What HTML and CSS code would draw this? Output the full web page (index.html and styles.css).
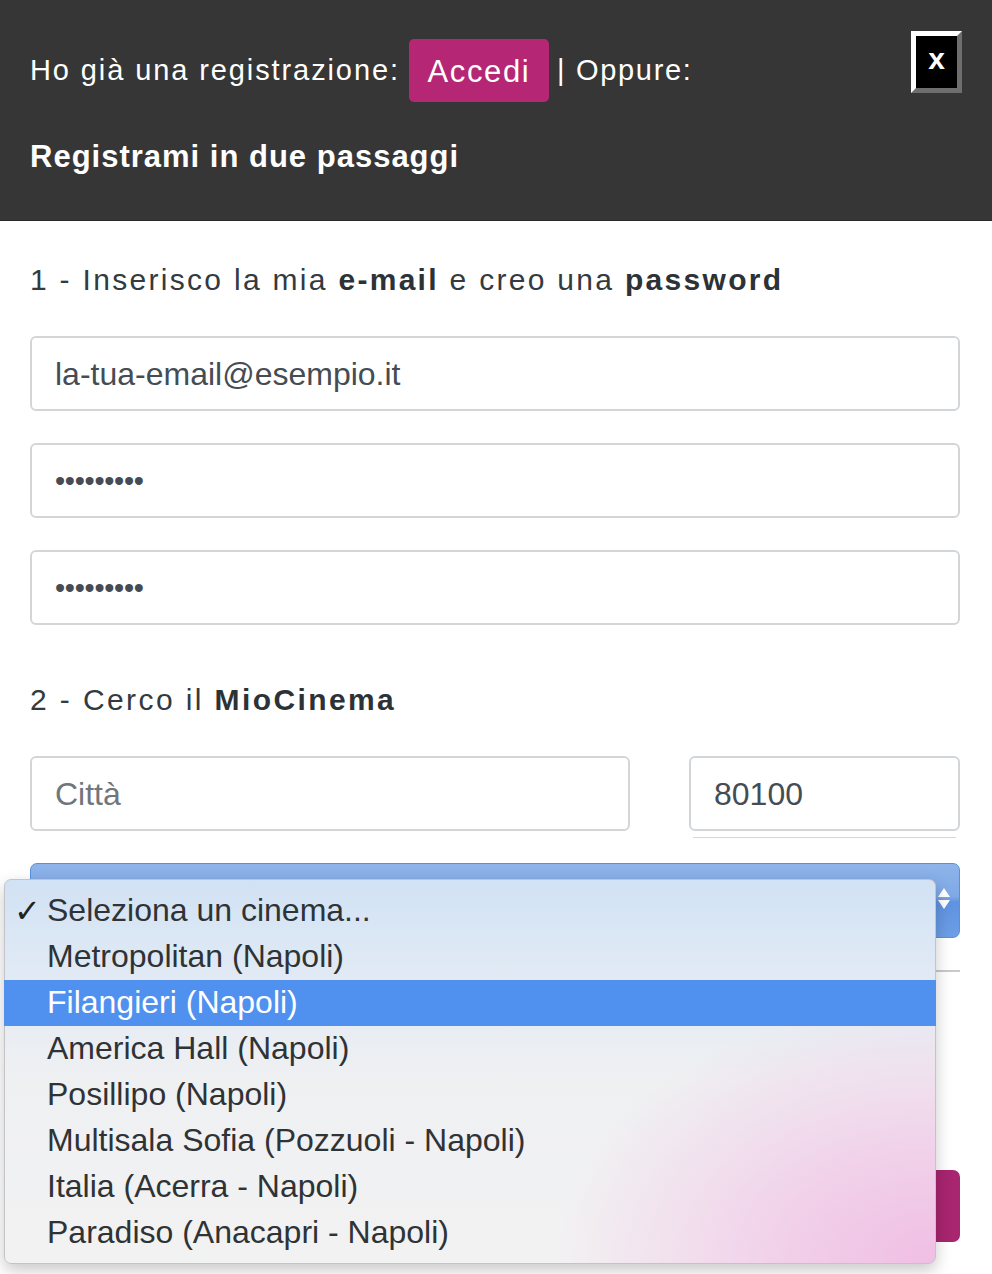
FILE: index.html
```html
<!DOCTYPE html>
<html lang="it">
<head>
<meta charset="utf-8">
<title>Registrazione</title>
<link rel="stylesheet" href="styles.css">
</head>
<body>
<div class="page">
  <header class="header">
    <div class="login-row">
      <span class="lead">Ho già una registrazione:</span>
      <a class="btn-accedi" href="#">Accedi</a>
      <span class="sep">| Oppure:</span>
      <button class="close" type="button">x</button>
    </div>
    <div class="reg-title">Registrami in due passaggi</div>
  </header>

  <main class="form">
    <h2 class="step">1 - Inserisco la mia <b>e-mail</b> e creo una <b>password</b></h2>
    <div class="field"><span class="value">la-tua-email@esempio.it</span></div>
    <div class="field"><span class="dots">•••••••••</span></div>
    <div class="field"><span class="dots">•••••••••</span></div>

    <h2 class="step step2">2 - Cerco il <b>MioCinema</b></h2>
    <div class="row">
      <div class="field city"><span class="placeholder">Città</span></div>
      <div class="cap-wrap">
        <div class="field cap"><span class="value">80100</span></div>
        <div class="cap-line"></div>
      </div>
    </div>
    <div class="select">
      <span class="arrows"><span class="up"></span><span class="down"></span></span>
    </div>
    <div class="rule"></div>
    <div class="spacer"></div>
    <div class="submit">Registrami</div>
  </main>

  <div class="menu">
    <div class="opt checked"><span class="check">✓</span>Seleziona un cinema...</div>
    <div class="opt">Metropolitan (Napoli)</div>
    <div class="opt active">Filangieri (Napoli)</div>
    <div class="opt">America Hall (Napoli)</div>
    <div class="opt">Posillipo (Napoli)</div>
    <div class="opt">Multisala Sofia (Pozzuoli - Napoli)</div>
    <div class="opt">Italia (Acerra - Napoli)</div>
    <div class="opt">Paradiso (Anacapri - Napoli)</div>
  </div>
</div>
</body>
</html>
```

FILE: styles.css
```css
* { box-sizing: border-box; }
html, body { margin: 0; padding: 0; }
body {
  width: 992px;
  height: 1274px;
  overflow: hidden;
  background: #fff;
  font-family: "Liberation Sans", Arial, sans-serif;
}
.page { position: relative; width: 992px; height: 1274px; }

.header {
  height: 221px;
  background: #363636;
  padding: 39px 30px 0 30px;
  color: #fff;
  border-bottom: 1px solid #2a2a2a;
}
.login-row {
  display: flex;
  align-items: center;
  height: 63px;
  font-size: 29px;
  letter-spacing: 1.9px;
}
.lead { margin-right: 9px; }
.btn-accedi {
  display: flex;
  align-items: center;
  justify-content: center;
  width: 140px;
  height: 63px;
  background: #b52774;
  color: #fff;
  text-decoration: none;
  border-radius: 5px;
  font-size: 31px;
  letter-spacing: 1.6px;
  padding-top: 2px;
}
.sep { margin-left: 8px; letter-spacing: 1.7px; }
.close {
  margin-left: auto;
  align-self: flex-start;
  margin-top: -8px;
  width: 51px;
  height: 62px;
  background: #000;
  color: #fff;
  border: 5px solid;
  border-color: #ffffff #6e6e6e #6e6e6e #ffffff;
  font-family: "Liberation Sans", Arial, sans-serif;
  font-weight: bold;
  font-size: 30px;
  line-height: 40px;
  padding: 0 0 6px 0;
  letter-spacing: 0;
}
.reg-title {
  margin-top: 37px;
  font-size: 31px;
  line-height: 36px;
  font-weight: bold;
  letter-spacing: 1px;
}

.form { padding: 41px 32px 0 30px; }
.step {
  margin: 0 0 38px 0;
  font-size: 30px;
  line-height: 36px;
  font-weight: normal;
  color: #333a40;
  letter-spacing: 2.3px;
}
.step b { font-weight: bold; color: #2d3236; }
.step2 { margin-top: 57px; letter-spacing: 2.4px; }

.field {
  height: 75px;
  border: 2px solid #d3d6d9;
  border-radius: 6px;
  background: #fff;
  display: flex;
  align-items: center;
  padding-left: 23px;
  font-size: 32px;
  color: #454c53;
  margin-bottom: 32px;
}
.field .value { padding-top: 2px; }
.dots { font-size: 29px; letter-spacing: -0.3px; color: #454c53; padding-top: 2px; }
.placeholder { color: #6f767c; padding-top: 2px; }

.row { display: flex; justify-content: space-between; margin-bottom: 32px; }
.row .field { margin-bottom: 0; }
.city { width: 600px; }
.cap-wrap { width: 271px; }
.cap-line { height: 1px; background: #c8d8ee; margin: 6px 4px -7px 4px; }

.select {
  position: relative;
  height: 75px;
  border-radius: 7px;
  border: 1px solid #5b8fdc;
  background: linear-gradient(#8fb4ea 0%, #7ea8e6 45%, #5f93e0 52%, #6c9ee6 100%);
}
.arrows { position: absolute; right: 9px; top: 24px; width: 12px; }
.arrows .up, .arrows .down {
  display: block; width: 0; height: 0;
  border-left: 6px solid transparent; border-right: 6px solid transparent;
}
.arrows .up { border-bottom: 9px solid #fff; margin-bottom: 3px; }
.arrows .down { border-top: 9px solid #fff; }

.rule { height: 2px; background: #c9c9c9; margin-top: 32px; }
.spacer { height: 198px; }
.submit {
  height: 72px;
  border-radius: 7px;
  background: #a8256f;
  color: #fff;
  font-size: 30px;
  display: flex; align-items: center; justify-content: center;
}

.menu {
  position: absolute;
  left: 4px;
  top: 879px;
  width: 932px;
  height: 385px;
  padding-top: 8px;
  border-radius: 7px;
  border: 1px solid #c4c4c8;
  background:
    radial-gradient(ellipse 380px 260px at 100% 100%, rgba(240,190,228,1) 0%, rgba(241,196,230,0.75) 40%, rgba(242,242,242,0) 100%),
    linear-gradient(#d1e2f4 0%, #e3ebf4 28%, #eff0f2 52%, #f2f2f2 100%);
  box-shadow: 0 6px 16px rgba(0,0,0,0.22);
  font-family: "Liberation Sans", Arial, sans-serif;
}
.opt {
  position: relative;
  height: 46px;
  line-height: 44px;
  padding-left: 42px;
  font-size: 32px;
  color: #2f3336;
  white-space: nowrap;
}
.opt.active { background: #5090ee; color: #fff; margin: 0 -1px; padding-left: 43px; }
.check {
  position: absolute;
  left: 9px;
  top: 1px;
  font-size: 32px;
  font-weight: bold;
  font-family: "DejaVu Sans", sans-serif;
  color: #222;
}
```
